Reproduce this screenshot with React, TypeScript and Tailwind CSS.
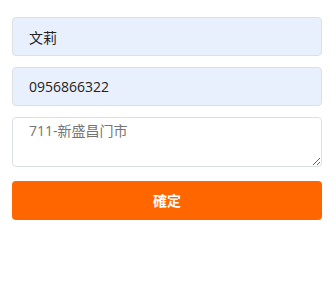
export default function App() {
  return (
    <div className="w-[336px] h-[281px] bg-white pt-[17px] pl-3 pr-[14px] font-['Open_Sans','Noto_Sans_CJK_SC',sans-serif]">
      <form className="flex flex-col" onSubmit={(e) => e.preventDefault()}>
        <input
          defaultValue="文莉"
          className="h-[39px] w-full rounded border border-[#dcdfe6] bg-[#e8f0fe] px-4 text-sm text-[#222] outline-none"
        />
        <input
          defaultValue="0956866322"
          className="mt-[11px] h-[39px] w-full rounded border border-[#dcdfe6] bg-[#e8f0fe] px-4 text-sm text-[#222] outline-none"
        />
        <textarea
          placeholder="711-新盛昌门市"
          className="mt-[11px] h-[50px] w-full rounded border border-[#dcdfe6] bg-white px-4 py-[3px] text-sm text-[#222] placeholder:text-[#757575] outline-none"
        />
        <button
          type="submit"
          className="mt-[14px] h-[39px] w-full rounded bg-[#ff6600] text-sm font-semibold text-white"
        >
          確定
        </button>
      </form>
    </div>
  );
}
